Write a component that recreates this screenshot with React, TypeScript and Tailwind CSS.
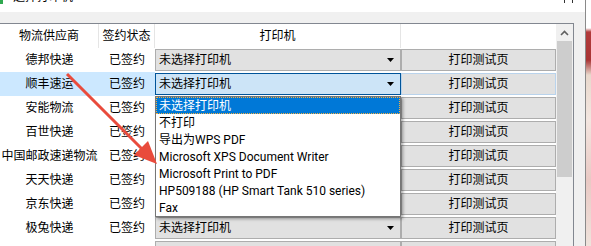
import React from 'react';

const rows = [
  { name: '德邦快递', status: '已签约' },
  { name: '顺丰速运', status: '已签约', selected: true },
  { name: '安能物流', status: '已签约' },
  { name: '百世快递', status: '已签约' },
  { name: '中国邮政速递物流', status: '已签约' },
  { name: '天天快递', status: '已签约' },
  { name: '京东快递', status: '已签约' },
  { name: '极兔快递', status: '已签约' },
];

const printers = [
  '未选择打印机',
  '不打印',
  '导出为WPS PDF',
  'Microsoft XPS Document Writer',
  'Microsoft Print to PDF',
  'HP509188 (HP Smart Tank 510 series)',
  'Fax',
];

function Caret() {
  return (
    <svg width="7" height="4" viewBox="0 0 7 4" className="shrink-0">
      <path d="M0 0h7L3.5 4z" fill="#000" />
    </svg>
  );
}

function Combo({ active, empty }: { active?: boolean; empty?: boolean }) {
  return (
    <div
      className={
        active
          ? 'mt-[1px] flex h-[22px] items-center justify-between border border-[#005499] bg-[#cce4f7] pl-[3px] pr-[6px]'
          : 'mt-[1px] flex h-[22px] items-center justify-between border border-[#adadad] bg-[#e1e1e1] pl-[3px] pr-[6px]'
      }
    >
      {!empty && <span>未选择打印机</span>}
      {!empty && <Caret />}
    </div>
  );
}

function TestButton({ active, empty }: { active?: boolean; empty?: boolean }) {
  return (
    <div
      className={
        active
          ? 'mt-[1px] flex h-[22px] items-center justify-center border border-[#b9d3ec] bg-[#e1e1e1]'
          : 'mt-[1px] flex h-[22px] items-center justify-center border border-[#adadad] bg-[#e1e1e1]'
      }
    >
      {!empty && '打印测试页'}
    </div>
  );
}

export default function App() {
  return (
    <div
      className="relative flex h-[246px] w-[591px] overflow-hidden bg-white text-[12px] leading-none text-black"
      style={{ fontFamily: 'Roboto, "Noto Sans CJK SC", sans-serif' }}
    >
      {/* window */}
      <div className="flex w-[585px] shrink-0 flex-col">
        {/* title bar, cut at the top */}
        <div className="relative h-[12px] shrink-0 overflow-hidden bg-white">
          <div className="absolute left-0 top-0 h-[4px] w-[3px] bg-[#2fa84f]" />
          <div className="absolute left-[13px] top-[-9px]">选择打印机</div>
          <div className="absolute left-[564px] top-0 h-[3px] w-[1px] bg-[#333]" />
          <div className="absolute left-[572px] top-0 h-[3px] w-[1px] bg-[#333]" />
        </div>
        <div className="h-[11px] shrink-0 bg-[#f0f0f0]" />

        <div className="flex flex-1 bg-[#f0f0f0]">
          <div className="flex w-[574px] border-r border-t border-[#828790] bg-white">
            {/* table */}
            <div className="w-[556px]">
              <div className="grid h-[24px] grid-cols-[99px_56px_246px_155px]">
                <div className="flex items-center justify-center border-r border-[#e5e5e5]">物流供应商</div>
                <div className="flex items-center justify-center border-r border-[#e5e5e5]">签约状态</div>
                <div className="flex items-center justify-center border-r border-[#e5e5e5]">打印机</div>
                <div />
              </div>
              {rows.map((r) => (
                <div key={r.name} className="grid h-[24px] grid-cols-[99px_56px_246px_155px]">
                  <div
                    className={
                      r.selected
                        ? 'flex items-center justify-center whitespace-nowrap bg-[#cce8ff]'
                        : 'flex items-center justify-center whitespace-nowrap'
                    }
                  >
                    {r.name}
                  </div>
                  <div
                    className={
                      r.selected
                        ? 'flex items-center justify-center bg-[#cce8ff]'
                        : 'flex items-center justify-center'
                    }
                  >
                    {r.status}
                  </div>
                  <Combo active={r.selected} />
                  <TestButton active={r.selected} />
                </div>
              ))}
              {/* next row, only its top edge is in view */}
              <div className="grid h-[24px] grid-cols-[99px_56px_246px_155px]">
                <div />
                <div />
                <Combo empty />
                <TestButton empty />
              </div>
            </div>

            {/* scrollbar */}
            <div className="flex w-[17px] flex-col bg-[#f0f0f0]">
              <div className="flex h-[17px] items-center justify-center">
                <svg width="9" height="6" viewBox="0 0 9 6">
                  <path d="M1 5l3.5-3.5L8 5" stroke="#606060" strokeWidth="1.6" fill="none" />
                </svg>
              </div>
              <div className="mx-[1px] h-[136px] bg-[#cdcdcd]" />
            </div>
          </div>
        </div>
      </div>

      {/* window edge + desktop */}
      <div className="w-[1px] shrink-0 bg-[#8a8a8a]" />
      <div className="flex-1 bg-[linear-gradient(180deg,#ffffff_0px,#ffffff_28px,#b23a3a_32px,#a83434_60px,#e8d8cc_75px,#f3e6e0_120px,#e9c9c4_180px,#efe3dc_246px)]" />

      {/* dropdown list */}
      <div className="absolute left-[155px] top-[96px] w-[246px] border border-[#767676] bg-white shadow-[2px_2px_3px_rgba(0,0,0,0.35)]">
        {printers.map((p, i) => (
          <div
            key={p}
            className={
              i === 0
                ? 'flex h-[17px] items-center whitespace-nowrap bg-[#0078d7] pl-[3px] text-white outline-1 outline-dotted -outline-offset-1 outline-[#f5b041]'
                : 'flex h-[17px] items-center whitespace-nowrap pl-[3px]'
            }
          >
            {p}
          </div>
        ))}
      </div>

      {/* red annotation arrow */}
      <svg className="pointer-events-none absolute left-0 top-0" width="591" height="246">
        <line x1="67" y1="74" x2="145" y2="152" stroke="#e94b3c" strokeWidth="3" />
        <polygon points="157,164 134,155 148,141" fill="#e94b3c" />
      </svg>
    </div>
  );
}
